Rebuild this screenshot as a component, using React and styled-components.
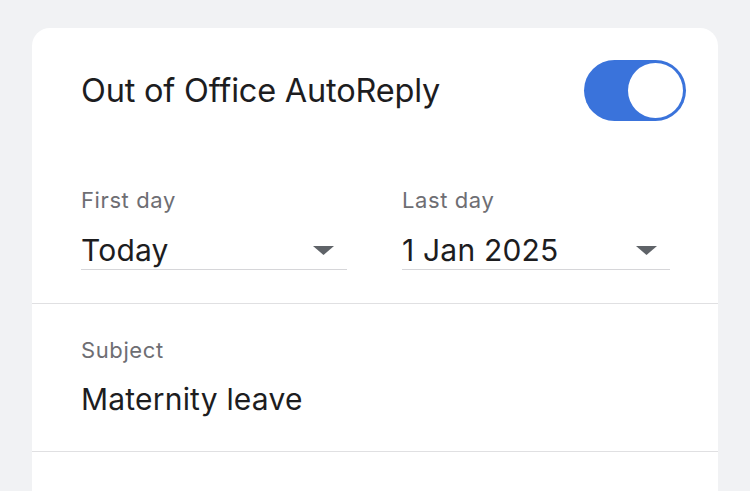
import React from 'react';
import styled, { createGlobalStyle } from 'styled-components';

const Global = createGlobalStyle`
  html, body {
    margin: 0;
    padding: 0;
    background: #f1f2f4;
    font-family: Inter, "Noto Sans", sans-serif;
    -webkit-font-smoothing: antialiased;
  }
`

const Page = styled.div`
  height: 491px;
  overflow: hidden;
  padding: 28px 32px 0;
  box-sizing: border-box;
`
const Card = styled.div`
  background: #fff;
  border-radius: 18px 18px 0 0;
  height: 600px;
`
const Header = styled.div`
  display: flex;
  align-items: center;
  justify-content: space-between;
  padding: 32px 32px 0 49px;
`
const Title = styled.h1`
  margin: 0;
  font-size: 32.5px;
  font-weight: 400;
  color: #1d1d1f;
  letter-spacing: -0.2px;
`
const Toggle = styled.div`
  width: 102px;
  height: 61px;
  border-radius: 31px;
  background: #3a73db;
  display: flex;
  align-items: center;
  justify-content: ${p => (p.on ? 'flex-end' : 'flex-start')};
  padding: 0 3px;
  box-sizing: border-box;
`
const Knob = styled.div`
  width: 55px;
  height: 55px;
  border-radius: 50%;
  background: #fff;
`
const DateRow = styled.div`
  display: grid;
  grid-template-columns: 266px 268px;
  column-gap: 55px;
  padding: 66px 0 33px 49px;
  border-bottom: 1px solid #e0e0e2;
`
const Field = styled.div`
  display: flex;
  flex-direction: column;
`
const Label = styled.div`
  font-size: 22px;
  line-height: 26px;
  letter-spacing: 0.6px;
  color: #6e6e73;
`
const Select = styled.div`
  display: flex;
  align-items: center;
  justify-content: space-between;
  margin-top: 19px;
  padding: 0 13px 1px 0;
  border-bottom: 1px solid #d6d6d9;
`
const Value = styled.div`
  font-size: 30px;
  line-height: 36px;
  letter-spacing: 0.2px;
  color: #1d1d1f;
`
const Arrow = styled.svg`
  width: 21px;
  height: 9px;
  fill: #5f6368;
`
const Section = styled.div`
  padding: 33px 49px 34px;
  border-bottom: 1px solid #e0e0e2;
`
const SubjectValue = styled(Value)`
  margin-top: 18px;
`

function Dropdown({ label, value }) {
  return (
    <Field>
      <Label>{label}</Label>
      <Select>
        <Value>{value}</Value>
        <Arrow viewBox="0 0 21 9"><polygon points="0,0 21,0 10.5,9" /></Arrow>
      </Select>
    </Field>
  );
}

export default function App() {
  return (
    <Page>
      <Global />
      <Card>
        <Header>
          <Title>Out of Office AutoReply</Title>
          <Toggle on>
            <Knob />
          </Toggle>
        </Header>
        <DateRow>
          <Dropdown label="First day" value="Today" />
          <Dropdown label="Last day" value="1 Jan 2025" />
        </DateRow>
        <Section>
          <Label>Subject</Label>
          <SubjectValue>Maternity leave</SubjectValue>
        </Section>
      </Card>
    </Page>
  );
}
